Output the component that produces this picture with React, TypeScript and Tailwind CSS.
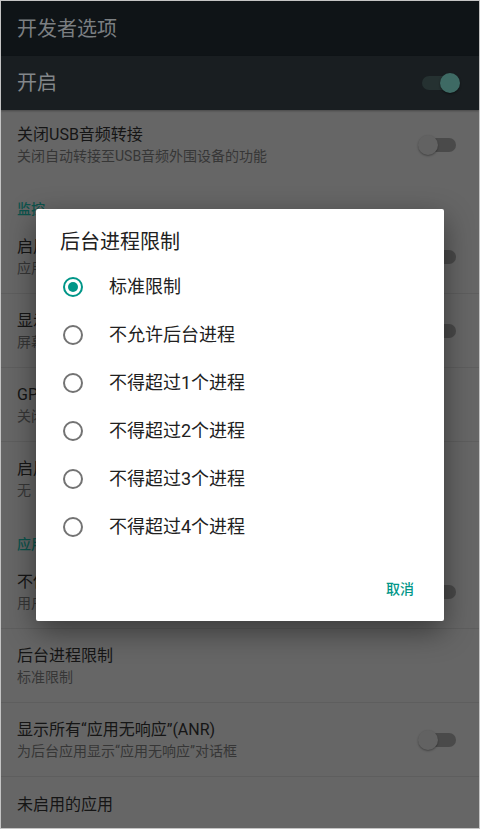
import React from 'react';

// Colours below are the settings screen as seen under the dialog's dim layer.
const FONT = 'Roboto, "Noto Sans CJK SC", "Noto Sans", sans-serif';

function Toggle({ on = false }: { on?: boolean }) {
  if (on) {
    return (
      <div className="relative w-[38px] h-[20px] flex items-center">
        <div className="w-[32px] h-[14px] rounded-full bg-[#253131]" />
        <div className="absolute right-0 w-[20px] h-[20px] rounded-full bg-[#3e6a64] shadow-[0_1px_2px_rgba(0,0,0,0.5)]" />
      </div>
    );
  }
  return (
    <div className="relative w-[38px] h-[20px] flex items-center justify-end">
      <div className="w-[32px] h-[14px] rounded-full bg-[#4a4a4a]" />
      <div className="absolute left-0 w-[20px] h-[20px] rounded-full bg-[#626262] shadow-[0_1px_2px_rgba(0,0,0,0.35)]" />
    </div>
  );
}

interface PrefRowProps {
  title: string;
  summary?: string;
  toggle?: boolean;
  height?: string;
}

function PrefRow({ title, summary, toggle, height = 'h-[73px]' }: PrefRowProps) {
  return (
    <div className={`${height} flex items-center justify-between pl-[16px] pr-[23px]`}>
      <div className="flex flex-col">
        <div className="text-[16px] leading-[22px] text-[#151515] whitespace-nowrap">{title}</div>
        {summary && (
          <div className="text-[14px] leading-[20px] text-[#363636] whitespace-nowrap">{summary}</div>
        )}
      </div>
      {toggle && <Toggle />}
    </div>
  );
}

function Divider() {
  return <div className="h-px bg-[#5e5e5e]" />;
}

function SectionHeader({ label }: { label: string }) {
  return (
    <div className="h-[40px] pl-[16px] pt-[19px] text-[14px] leading-[20px] text-[#0d534c] font-medium">
      {label}
    </div>
  );
}

function Radio({ checked }: { checked: boolean }) {
  return (
    <div
      className={`w-[20px] h-[20px] rounded-full border-2 flex items-center justify-center ${
        checked ? 'border-[#009688]' : 'border-[#737373]'
      }`}
    >
      {checked && <div className="w-[10px] h-[10px] rounded-full bg-[#009688]" />}
    </div>
  );
}

const OPTIONS = [
  '标准限制',
  '不允许后台进程',
  '不得超过1个进程',
  '不得超过2个进程',
  '不得超过3个进程',
  '不得超过4个进程',
];

export default function App() {
  const selected = 0;

  return (
    <div
      className="relative w-[480px] h-[829px] overflow-hidden bg-[#666666] border border-[#c4c4c4] box-border"
      style={{ fontFamily: FONT }}
    >
      {/* toolbar */}
      <div className="h-[55px] bg-[#0f1417] flex items-center pl-[16px]">
        <span className="text-[20px] text-[#7b7f82]">开发者选项</span>
      </div>

      {/* master switch */}
      <div className="h-[54px] bg-[#191e21] flex items-center justify-between pl-[16px] pr-[19px] shadow-[0_1px_2px_rgba(0,0,0,0.3)]">
        <span className="text-[20px] text-[#83878a]">开启</span>
        <Toggle on />
      </div>

      <PrefRow
        title="关闭USB音频转接"
        summary="关闭自动转接至USB音频外围设备的功能"
        toggle
        height="h-[70px]"
      />

      <SectionHeader label="监控" />
      <PrefRow title="启用严格模式" summary="应用在主线程上执行长时间操作时闪烁屏幕" toggle />
      <Divider />
      <PrefRow title="显示CPU使用情况" summary="屏幕叠加层显示当前CPU使用情况" toggle />
      <Divider />
      <PrefRow title="GPU呈现模式分析" summary="关闭" />
      <Divider />
      <PrefRow title="启用OpenGL跟踪" summary="无" />

      <SectionHeader label="应用" />
      <PrefRow title="不保留活动" summary="用户离开后即销毁每个活动" toggle />
      <Divider />
      <PrefRow title="后台进程限制" summary="标准限制" />
      <Divider />
      <PrefRow title="显示所有“应用无响应”(ANR)" summary="为后台应用显示“应用无响应”对话框" toggle />
      <Divider />
      <PrefRow title="未启用的应用" height="h-[56px]" />

      {/* dialog */}
      <div className="absolute inset-0 flex items-center justify-center">
        <div className="w-[408px] h-[412px] bg-white rounded-[2px] shadow-[0_10px_30px_rgba(0,0,0,0.45)] flex flex-col">
          <div className="pl-[24px] pt-[19px] pb-[7px] text-[20px] leading-[28px] text-[#212121]">
            后台进程限制
          </div>
          <div className="flex flex-col">
            {OPTIONS.map((label, i) => (
              <div key={label} className="h-[48px] flex items-center pl-[27px]">
                <Radio checked={i === selected} />
                <span className="ml-[26px] text-[18px] text-[#212121]">{label}</span>
              </div>
            ))}
          </div>
          <div className="flex justify-end pr-[30px] pt-[28px]">
            <button type="button" className="text-[14px] leading-[20px] font-medium text-[#009688]">
              取消
            </button>
          </div>
        </div>
      </div>
    </div>
  );
}
